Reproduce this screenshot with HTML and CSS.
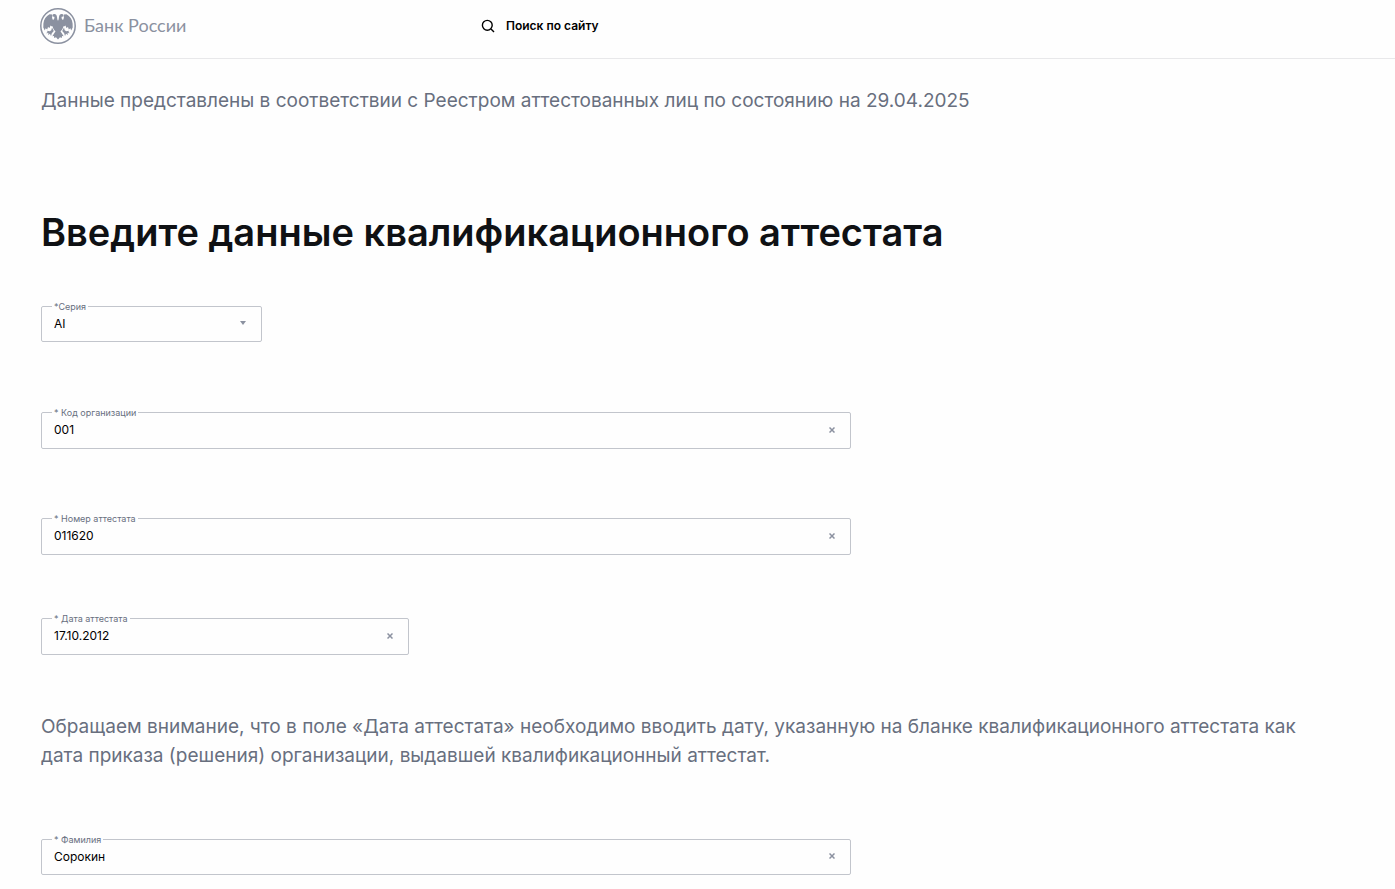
FILE: index.html
```html
<!DOCTYPE html>
<html lang="ru">
<head>
    <meta charset="UTF-8">
    <meta name="viewport" content="width=device-width, initial-scale=1.0">
    <title>Банк России</title>
    <link rel="stylesheet" href="styles.css">
</head>
<body>
    <header class="header">
        <a class="logo" href="#">
            <svg class="logo-icon" viewBox="0 0 36 36" width="36" height="36" aria-hidden="true">
                <defs>
                    <g id="half">
                        <!-- wing -->
                        <path d="M12.200 6.500L9.500 6.300C6 8.300 3.800 11.500 3.400 15.500L3.300 19.500L4.800 22.500L5.600 20.300L7.200 21.600L8 19L9.600 20L10.500 17.500L12 18.500L13.500 18L13.500 12.500C12.200 11.500 11.600 9 12.200 6.500Z"/>
                        <!-- head and body -->
                        <path d="M18 12.800C17.300 12 17.200 10.500 17 9C16.800 6.800 15.500 5.800 14 6.100C12.800 6.300 12.300 7.300 12.400 8.600L14.300 8.700C14.800 10 14 11.300 12.800 12.200L12.600 17.800C12.900 20.200 13.800 22 15.500 23.200L12.300 28.200L14 28L14.200 30L16 29.300L18 31.500Z"/>
                        <!-- leg -->
                        <path d="M12 19.600L13.800 23L11.800 25.200L11 28L10 25.800L8 27L8.500 25L6 25.200L7.700 23.900L6.800 22.700L9.700 23.200L11.300 22.300Z"/>
                    </g>
                </defs>
                <circle cx="18" cy="18" r="17.200" fill="none" stroke="#8b91a0" stroke-width="1.500"/>
                <g fill="#8b91a0">
                    <use href="#half"/>
                    <use href="#half" transform="translate(36 0) scale(-1 1)"/>
                </g>
            </svg>
            <span>Банк России</span>
        </a>
        <a class="search" href="#">
            <svg viewBox="0 0 14 14" width="14" height="14" fill="none" stroke="#000" stroke-width="1.4" aria-hidden="true">
                <circle cx="6.300" cy="6.300" r="4.900"/>
                <path d="M10 10L13 13"/>
            </svg>
            <span>Поиск по сайту</span>
        </a>
    </header>

    <main class="content">
        <p class="text">Данные представлены в соответствии с Реестром аттестованных лиц по состоянию на 29.04.2025</p>
        <h1>Введите данные квалификационного аттестата</h1>

        <form class="form">
            <div class="field field-select">
                <label for="series">*Серия</label>
                <select id="series">
                    <option>AI</option>
                </select>
                <svg class="arrow" viewBox="0 0 6 4" width="6" height="4" aria-hidden="true"><path d="M0 0H6L3 4Z" fill="#8b91a0"/></svg>
            </div>

            <div class="field">
                <label for="code">* Код организации</label>
                <input type="text" id="code" value="001">
                <button type="button" class="clear" aria-label="Очистить">
                    <svg viewBox="0 0 6 6" width="6" height="6"><path d="M.5 .5L5.500 5.500M5.500 .5L.5 5.500"/></svg>
                </button>
            </div>

            <div class="field">
                <label for="number">* Номер аттестата</label>
                <input type="text" id="number" value="011620">
                <button type="button" class="clear" aria-label="Очистить">
                    <svg viewBox="0 0 6 6" width="6" height="6"><path d="M.5 .5L5.500 5.500M5.500 .5L.5 5.500"/></svg>
                </button>
            </div>

            <div class="field field-date">
                <label for="date">* Дата аттестата</label>
                <input type="text" id="date" value="17.10.2012">
                <button type="button" class="clear" aria-label="Очистить">
                    <svg viewBox="0 0 6 6" width="6" height="6"><path d="M.5 .5L5.500 5.500M5.500 .5L.5 5.500"/></svg>
                </button>
            </div>

            <p class="text note">Обращаем внимание, что в поле «Дата аттестата» необходимо вводить дату, указанную на бланке квалификационного аттестата как дата приказа (решения) организации, выдавшей квалификационный аттестат.</p>

            <div class="field field-last">
                <label for="surname">* Фамилия</label>
                <input type="text" id="surname" value="Сорокин">
                <button type="button" class="clear" aria-label="Очистить">
                    <svg viewBox="0 0 6 6" width="6" height="6"><path d="M.5 .5L5.500 5.500M5.500 .5L.5 5.500"/></svg>
                </button>
            </div>
        </form>
    </main>
</body>
</html>
```
FILE: styles.css
```css
* {
    box-sizing: border-box;
}

body {
    margin: 0;
    padding-left: 40px;
    background-color: #fefefe;
    font-family: Inter, "Noto Sans", sans-serif;
    color: #0f1114;
}

.header {
    display: flex;
    align-items: center;
    height: 59px;
    padding-bottom: 6px;
    border-bottom: 1px solid #e8e8ea;
}

.logo {
    display: flex;
    align-items: center;
    gap: 8px;
    width: 441px;
    color: #8b91a0;
    font-family: Lato, sans-serif;
    font-size: 18px;
    text-decoration: none;
}

.logo span,
.search span {
    padding-bottom: 2px;
}

.search {
    display: flex;
    align-items: center;
    gap: 11px;
    color: #000;
    font-size: 12px;
    font-weight: 600;
    text-decoration: none;
}

.content {
    padding: 27px 80px 14px 1px;
}

.text {
    margin: 0;
    color: #686f7e;
    font-size: 19px;
    line-height: 29px;
}

h1 {
    margin: 93px 0 50px;
    font-size: 38px;
    font-weight: 600;
    line-height: 48px;
}

.field {
    position: relative;
    display: flex;
    align-items: center;
    max-width: 810px;
    height: 37px;
    margin-bottom: 69px;
    padding-bottom: 2px;
    border: 1px solid #c2c5cc;
    border-radius: 2px;
}

.field label {
    position: absolute;
    top: -6px;
    left: 10px;
    padding: 0 2px;
    background-color: #fefefe;
    color: #686f7e;
    font-size: 9px;
    line-height: 12px;
}

.field input,
.field select {
    flex: 1;
    min-width: 0;
    height: 100%;
    padding: 0 12px;
    border: none;
    outline: none;
    background: none;
    color: #000;
    font-family: inherit;
    font-size: 12px;
    appearance: none;
}

.field-select {
    max-width: 221px;
    height: 36px;
    margin-bottom: 70px;
}

.arrow {
    position: absolute;
    right: 15px;
    pointer-events: none;
}

.clear {
    display: flex;
    padding: 6px 15px;
    border: none;
    background: none;
    cursor: pointer;
}

.clear path {
    fill: none;
    stroke: #8b91a0;
    stroke-width: 1.5;
}

.field-date {
    max-width: 368px;
    margin-top: -6px;
    margin-bottom: 57px;
}

.note {
    margin-bottom: 69px;
}

.field-last {
    height: 36px;
    margin-bottom: 0;
}
```
